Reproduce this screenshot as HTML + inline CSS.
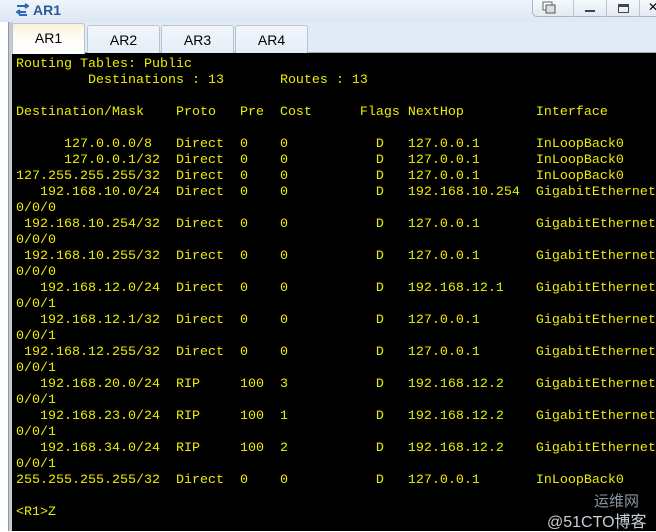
<!DOCTYPE html>
<html><head><meta charset="utf-8"><style>
*{margin:0;padding:0;box-sizing:border-box}
body{width:656px;height:531px;overflow:hidden;background:#fff;position:relative;font-family:"Liberation Sans",sans-serif}
.title{position:absolute;left:0;top:0;width:656px;height:22px;background:linear-gradient(#eef4fb,#dde8f4)}
.title .t{position:absolute;left:33px;top:2px;font-size:14px;font-weight:bold;color:#2a5a9a}
.ico{position:absolute;left:16px;top:3px;width:13px;height:14px}
.btns{position:absolute;left:532px;top:-1px;width:130px;height:18px;border:1px solid #a8b8cc;border-radius:0 0 0 5px;background:linear-gradient(#f6f9fc,#e2eaf3)}
.btns div{position:absolute;top:0;height:17px;border-left:1px solid #b8c6d6}
.tabbar{position:absolute;left:8px;top:22px;width:648px;height:31px;background:#e0ebf7;border-bottom:1px solid #9aa8b8}
.tab{position:absolute;top:3px;height:28px;width:73px;border:1px solid #b8c4d2;border-bottom:none;border-radius:3px 3px 0 0;background:linear-gradient(#f2f6fb,#e4edf7);font-size:14px;text-align:center;line-height:28px;color:#000}
.tab.a{top:1px;height:31px;background:linear-gradient(#fbf1d6,#fdfbf4 40%,#fff);z-index:2}
.left{position:absolute;left:0;top:22px;width:8px;height:509px;background:#fff}
.lb{position:absolute;left:8px;top:22px;width:5px;height:509px;background:#c4cad2;border-left:1px solid #8d97a3}
.term{position:absolute;left:12px;top:53px;width:644px;height:478px;background:#000}
pre{position:absolute;left:16px;top:57px;font-family:"Liberation Mono",monospace;font-size:13.33px;line-height:16px;color:#eded00;white-space:pre}
.wm{position:absolute;color:#8a96a0;font-family:"Liberation Sans","Noto Sans CJK SC",sans-serif}
</style></head><body>
<div class="title">
<svg class="ico" viewBox="0 0 13 14"><path d="M9 1l3 2-3 2M1 3h11M4 7L1 9l3 2M1 9h9M3 12h8" stroke="#2a6ab0" stroke-width="2" fill="none"/></svg>
<span class="t">AR1</span>
<div class="btns">
<div style="left:0;border:none"><svg width="30" height="17"><rect x="10" y="2" width="9" height="8" fill="#fff" stroke="#666"/><rect x="13" y="5" width="9" height="8" fill="#ddd" stroke="#555"/></svg></div>
<div style="left:40px;width:33px"><div style="position:absolute;left:11px;top:10px;width:10px;height:2px;background:#445;border:none"></div></div>
<div style="left:73px;width:33px"><div style="position:absolute;left:11px;top:4px;width:11px;height:9px;border:1px solid #445;border-top:3px solid #445"></div></div>
<div style="left:106px;width:30px;font-size:12px;padding-left:8px">✕</div>
</div>
</div>
<div class="tabbar">
<div class="tab a" style="left:4px">AR1</div>
<div class="tab" style="left:79px">AR2</div>
<div class="tab" style="left:153px">AR3</div>
<div class="tab" style="left:227px">AR4</div>
</div>
<div class="left"></div>
<div class="lb"></div>
<div class="term"></div>
<pre>Routing Tables: Public
         Destinations : 13       Routes : 13

Destination/Mask    Proto   Pre  Cost      Flags NextHop         Interface

      127.0.0.0/8   Direct  0    0           D   127.0.0.1       InLoopBack0
      127.0.0.1/32  Direct  0    0           D   127.0.0.1       InLoopBack0
127.255.255.255/32  Direct  0    0           D   127.0.0.1       InLoopBack0
   192.168.10.0/24  Direct  0    0           D   192.168.10.254  GigabitEthernet
0/0/0
 192.168.10.254/32  Direct  0    0           D   127.0.0.1       GigabitEthernet
0/0/0
 192.168.10.255/32  Direct  0    0           D   127.0.0.1       GigabitEthernet
0/0/0
   192.168.12.0/24  Direct  0    0           D   192.168.12.1    GigabitEthernet
0/0/1
   192.168.12.1/32  Direct  0    0           D   127.0.0.1       GigabitEthernet
0/0/1
 192.168.12.255/32  Direct  0    0           D   127.0.0.1       GigabitEthernet
0/0/1
   192.168.20.0/24  RIP     100  3           D   192.168.12.2    GigabitEthernet
0/0/1
   192.168.23.0/24  RIP     100  1           D   192.168.12.2    GigabitEthernet
0/0/1
   192.168.34.0/24  RIP     100  2           D   192.168.12.2    GigabitEthernet
0/0/1
255.255.255.255/32  Direct  0    0           D   127.0.0.1       InLoopBack0

&lt;R1&gt;Z</pre>
<div class="wm" style="left:594px;top:490px;font-size:15px">运维网</div>
<div class="wm" style="left:547px;top:508px;font-size:16px;color:#c8cfd6">@51CTO博客</div>
</body></html>
